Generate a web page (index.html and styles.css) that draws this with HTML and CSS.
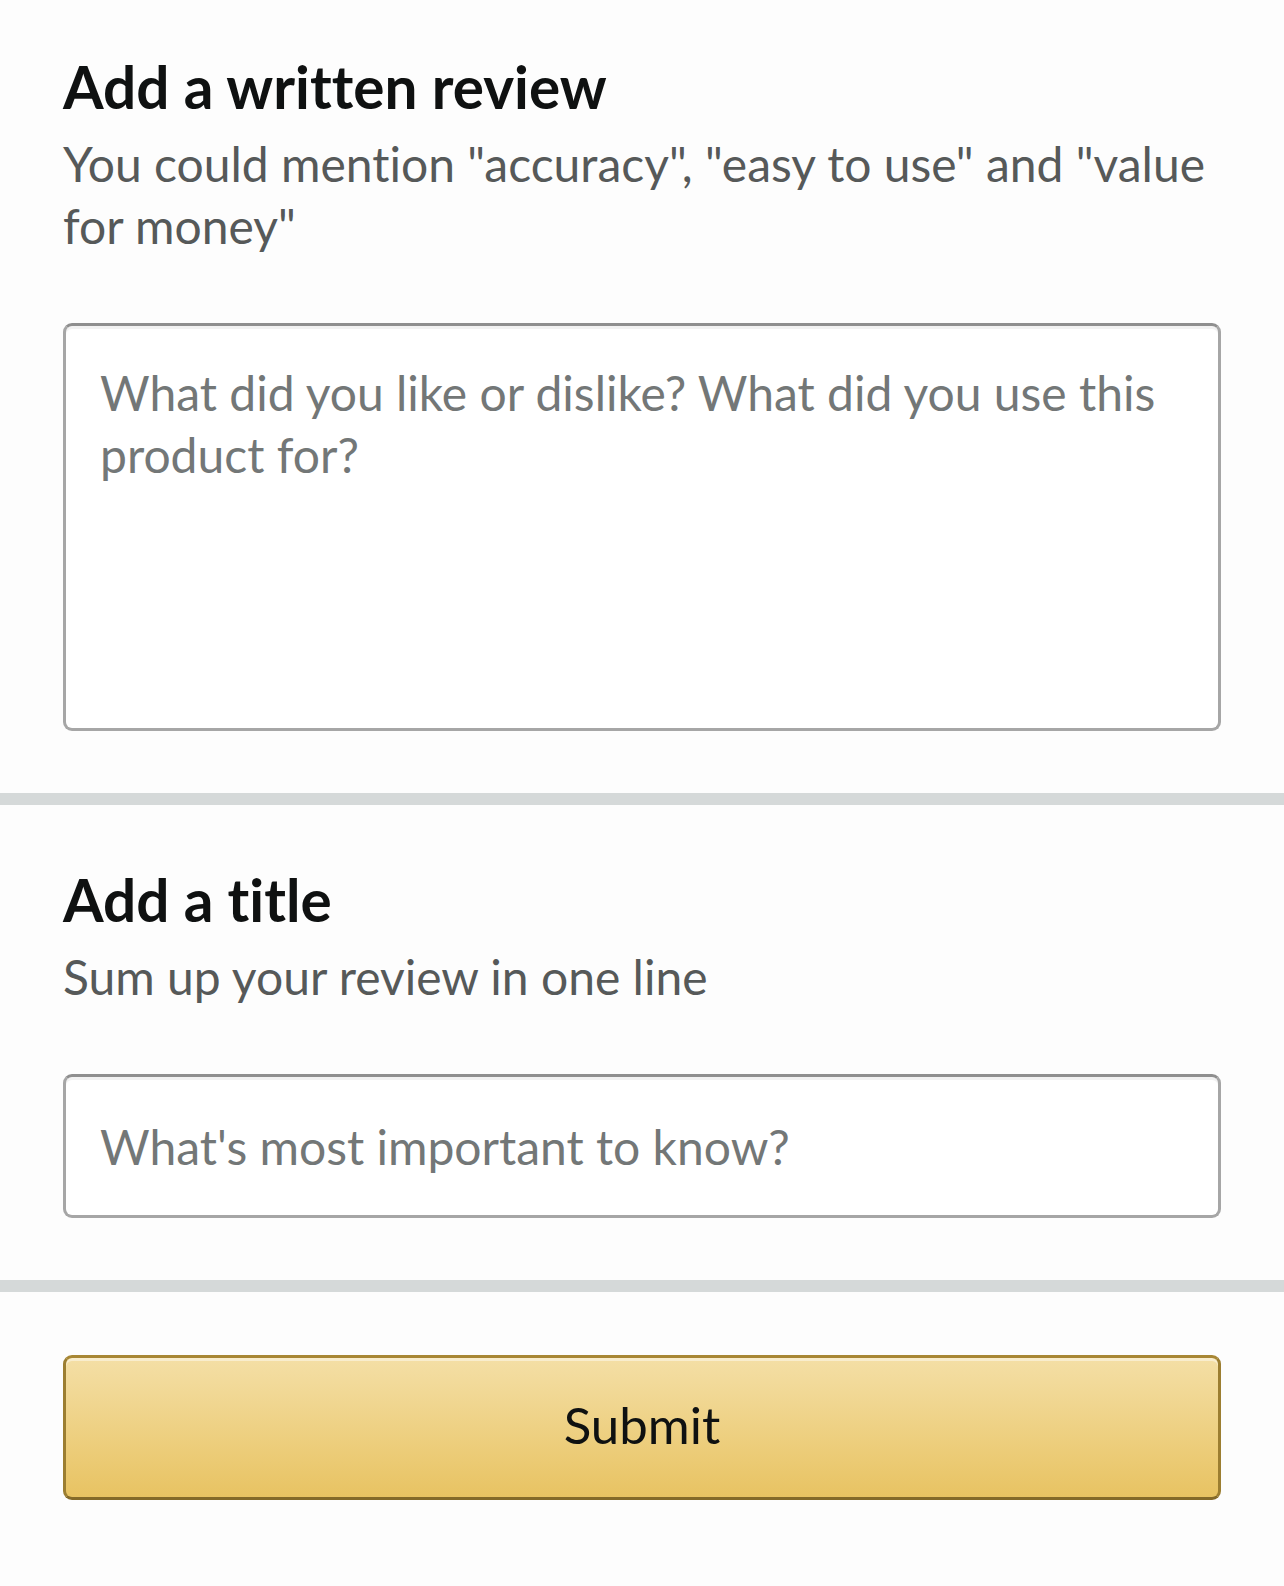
FILE: index.html
```html
<!DOCTYPE html>
<html lang="en">
<head>
<meta charset="utf-8">
<title>Write a review</title>
<link rel="stylesheet" href="styles.css">
</head>
<body class="page">
  <section class="block block--first">
    <h2 class="block__title">Add a written review</h2>
    <p class="block__hint">You could mention "accuracy", "easy to use" and "value for money"</p>
    <textarea class="field field--area" placeholder="What did you like or dislike? What did you use this product for?"></textarea>
  </section>
  <div class="divider"></div>
  <section class="block">
    <h2 class="block__title">Add a title</h2>
    <p class="block__hint">Sum up your review in one line</p>
    <input class="field field--line" type="text" placeholder="What's most important to know?">
  </section>
  <div class="divider"></div>
  <section class="actions">
    <button class="btn-submit" type="button">Submit</button>
  </section>
</body>
</html>
```
FILE: styles.css
```css
* { box-sizing: border-box; }

.page {
  margin: 0;
  background: #fdfdfd;
  font-family: "Lato", "Noto Sans", sans-serif;
  font-variant-ligatures: none;
  font-feature-settings: "liga" 0, "dlig" 0, "clig" 0;
  color: #0f1111;
}

.block {
  padding: 59px 63px 62px;
}

.block--first {
  padding-top: 51px;
}

.block__title {
  margin: 0;
  font-size: 58.5px;
  line-height: 70px;
  font-weight: 700;
  color: #0f1111;
}

.block__hint {
  margin: 12px 0 0;
  font-size: 48px;
  line-height: 62px;
  color: #565959;
}

.field {
  display: block;
  width: 100%;
  margin-top: 66px;
  border: 3px solid #a6a6a6;
  border-top-color: #8f8f8f;
  border-radius: 9px;
  background: #fff;
  box-shadow: inset 0 3px 0 rgba(0, 0, 0, 0.05);
  font-family: "Lato", "Noto Sans", sans-serif;
  font-variant-ligatures: none;
  font-feature-settings: "liga" 0, "dlig" 0, "clig" 0;
  font-size: 48px;
  color: #0f1111;
  outline: none;
}

.field::placeholder {
  color: #737777;
  opacity: 1;
}

.field--area {
  height: 408px;
  padding: 36px 34px;
  line-height: 62px;
  resize: none;
  overflow: hidden;
}

.field--line {
  height: 144px;
  padding: 0 34px 0 34px;
}

.divider {
  height: 12px;
  background: #d5d9d9;
}

.actions {
  padding: 63px 63px 86px;
}

.btn-submit {
  display: block;
  width: 100%;
  height: 145px;
  padding: 0 0 6px;
  border: 3px solid #a88734;
  border-color: #a88734 #9c7e31 #846a29;
  border-radius: 9px;
  background: linear-gradient(to bottom, #f4dfa6, #e8c362);
  box-shadow: inset 0 3px 0 rgba(255, 255, 255, 0.45);
  font-family: "Lato", "Noto Sans", sans-serif;
  font-variant-ligatures: none;
  font-feature-settings: "liga" 0, "dlig" 0, "clig" 0;
  font-size: 51px;
  color: #0f1111;
  cursor: pointer;
}
```
